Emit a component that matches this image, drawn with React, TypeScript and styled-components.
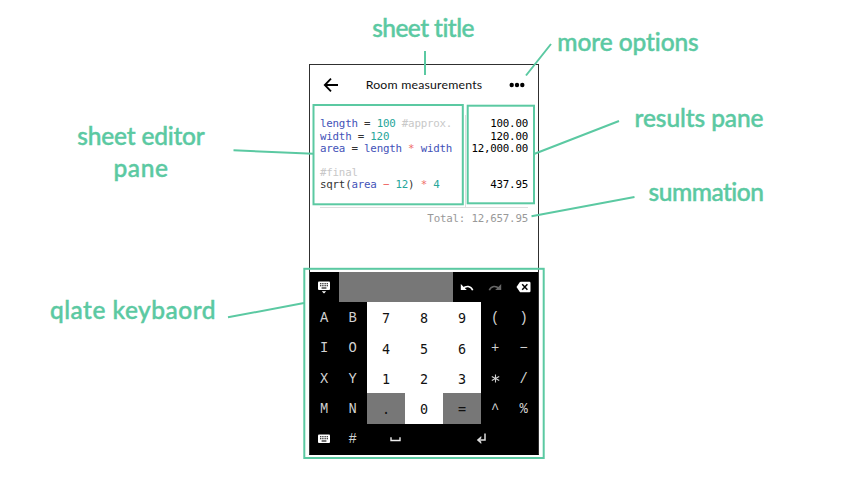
import React from 'react';
import styled, { createGlobalStyle } from 'styled-components';

const GREEN = '#5bc9a2';

const GlobalStyle = createGlobalStyle`
  * { box-sizing: border-box; }
  body { margin: 0; background: #fff; overflow: hidden; }
`;

const Canvas = styled.main`
  position: relative;
  width: 848px;
  height: 480px;
  padding-top: 64px;
  background: #fff;
`;

const Phone = styled.section`
  display: flex;
  flex-direction: column;
  width: 230px;
  height: 391px;
  margin-left: 309px;
  border: 1px solid #303030;
  border-bottom-color: #000;
  background: #fff;
`;

const Header = styled.header`
  display: flex;
  align-items: center;
  justify-content: space-between;
  height: 40px;
  padding: 0 13px;
`;

const Title = styled.h1`
  margin: 0;
  color: #111;
  font: 400 12.3px/16px Lato, sans-serif;
  letter-spacing: 0.2px;
  white-space: nowrap;
`;

const Sheet = styled.div`
  display: flex;
  height: 92px;
  margin: 10px 10px 0;
`;

const codeFont = `
  font-family: 'DejaVu Sans Mono', 'Liberation Mono', monospace;
  font-size: 10.8px;
  letter-spacing: -0.21px;
  line-height: 12.2px;
`;

const Editor = styled.div`
  ${codeFont}
  width: 146px;
  padding-top: 3.4px;
  border-right: 1px solid #dedede;
  color: #333;
  white-space: pre;
`;

const Results = styled.div`
  ${codeFont}
  flex: 1;
  padding-top: 3.4px;
  color: #000;
  text-align: right;
  white-space: pre;
`;

const Line = styled.div`
  height: 12.2px;
`;

const tokenColors = {
  name: '#4353b8',
  number: '#27a69a',
  operator: '#ef6a68',
  comment: '#c8c8c8',
};

const Token = styled.span<{ $kind: keyof typeof tokenColors }>`
  color: ${({ $kind }) => tokenColors[$kind]};
`;

const Total = styled.div`
  ${codeFont}
  margin: 0 10px;
  padding-top: 5px;
  border-top: 1px solid #dedede;
  color: #999;
  text-align: right;
`;

const Keyboard = styled.div`
  display: grid;
  grid-template-columns: repeat(24, 1fr);
  grid-template-rows: repeat(6, 1fr);
  height: 182px;
  margin-top: auto;
  background: #000;
`;

type Tone = 'dark' | 'light' | 'grey';

const Key = styled.div<{ $span: number; $tone: Tone }>`
  grid-column: span ${({ $span }) => $span};
  display: flex;
  align-items: center;
  justify-content: center;
  background: ${({ $tone }) => ({ dark: '#000', light: '#fff', grey: '#777' })[$tone]};
  color: ${({ $tone }) => ($tone === 'dark' ? '#d2d2d2' : '#111')};
  font-family: ${({ $tone }) =>
    $tone === 'dark' ? "'Liberation Mono', monospace" : "'DejaVu Sans Mono', monospace"};
  font-size: ${({ $tone }) => ($tone === 'dark' ? '13.8px' : '13.4px')};
  line-height: 1;
`;

const Glyph = styled.span`
  padding-top: 3px;
`;

const Annotations = styled.svg`
  position: absolute;
  inset: 0;
  fill: none;
  stroke: ${GREEN};
  stroke-width: 2;
`;

const Label = styled.div<{ $x: number; $y: number; $w: number; $spacing: number }>`
  position: absolute;
  left: ${({ $x }) => $x}px;
  top: ${({ $y }) => $y}px;
  width: ${({ $w }) => $w}px;
  color: ${GREEN};
  font: 500 24.5px/32px Lato, sans-serif;
  font-variant-ligatures: none;
  -webkit-text-stroke: 0.45px ${GREEN};
  letter-spacing: ${({ $spacing }) => $spacing}px;
  text-align: center;
  white-space: nowrap;
`;

const LabelLine = styled.span<{ $spacing?: number }>`
  display: block;
  letter-spacing: ${({ $spacing }) => ($spacing === undefined ? 'inherit' : `${$spacing}px`)};
`;

const BackIcon = () => (
  <svg width="16" height="16" viewBox="0 0 16 16" fill="none" stroke="#000" strokeWidth="1.8">
    <path d="M15 8H2M8 1.7 1.8 8 8 14.3" />
  </svg>
);

const MoreIcon = () => (
  <svg width="16" height="6" viewBox="0 0 16 6">
    <circle cx="2.7" cy="3" r="2.2" />
    <circle cx="8" cy="3" r="2.2" />
    <circle cx="13.3" cy="3" r="2.2" />
  </svg>
);

const KeyboardIcon = ({ hide = false }: { hide?: boolean }) => (
  <svg width="12" height="13" viewBox="0 0 12 13">
    <rect y={hide ? 0.5 : 2.5} width="12" height="8.4" rx="1" fill="#fff" />
    <g transform={hide ? 'translate(0 -1.5)' : 'translate(0 .5)'} stroke="#000" strokeWidth="1.1">
      <path d="M2 4.2h8M2 6.2h8" strokeDasharray="1.1 .62" />
      <path d="M3.6 8.5h4.8" />
    </g>
    {hide && <path d="M3.8 10.2h4.4L6 12.5Z" fill="#fff" />}
  </svg>
);

const UndoIcon = ({ redo = false }: { redo?: boolean }) => (
  <svg width="14" height="9" viewBox="0 0 14 9">
    <g transform={redo ? 'matrix(-1 0 0 1 14 0)' : undefined}>
      <path d="M.8 1v6h6L4.5 4.8Z" fill={redo ? '#666' : '#fff'} />
      <path d="M3 5.6C6 2.4 10.7 2.6 12.7 7.3" fill="none" stroke={redo ? '#666' : '#fff'} strokeWidth="1.6" />
    </g>
  </svg>
);

const DeleteIcon = () => (
  <svg width="15" height="12" viewBox="0 0 15 12">
    <path d="M4.8.7h8.5q1.2 0 1.2 1.2v8.2q0 1.2-1.2 1.2H4.8q-.7 0-1.1-.6L.5 6l3.2-4.7q.4-.6 1.1-.6Z" fill="#fff" />
    <path d="m6.2 3.3 5.2 5.4m0-5.4L6.2 8.7" stroke="#000" strokeWidth="1.5" />
  </svg>
);

const SpaceIcon = () => (
  <svg width="11" height="6" viewBox="0 0 11 6" fill="none" stroke="#eee" strokeWidth="1.4">
    <path d="M1 1.3v3.2h9V1.3" />
  </svg>
);

const EnterIcon = () => (
  <svg width="11" height="12" viewBox="0 0 11 12">
    <path d="M9 .6v6.4H3" fill="none" stroke="#ddd" strokeWidth="1.5" />
    <path d="M5.3 2.9v2.3L3.4 7l1.9 1.8v2.3L.8 7Z" fill="#ddd" />
  </svg>
);

const rows = ['AB789()', 'IO456+−', 'XY123*/', 'MN.0=^%'];

const symbolKey = (char: string, index: number) => {
  const middle = index > 1 && index < 5;
  const tone: Tone = !middle ? 'dark' : char === '.' || char === '=' ? 'grey' : 'light';
  return (
    <Key key={char} $span={middle ? 4 : 3} $tone={tone}>
      {char === '*' ? (
        <svg width="9" height="9" viewBox="0 0 9 9" stroke="#d2d2d2" strokeWidth="1.1">
          <path d="M4.5.5v8M.8 2.4l7.4 4.2M.8 6.6l7.4-4.2" />
        </svg>
      ) : (
        <Glyph>{char}</Glyph>
      )}
    </Key>
  );
};

export default function App() {
  return (
    <>
      <GlobalStyle />
      <Canvas>
        <Phone>
          <Header>
            <BackIcon />
            <Title>Room measurements</Title>
            <MoreIcon />
          </Header>
          <Sheet>
            <Editor>
              <Line><Token $kind="name">length</Token> = <Token $kind="number">100</Token> <Token $kind="comment">#approx.</Token></Line>
              <Line><Token $kind="name">width</Token> = <Token $kind="number">120</Token></Line>
              <Line><Token $kind="name">area</Token> = <Token $kind="name">length</Token> <Token $kind="operator">*</Token> <Token $kind="name">width</Token></Line>
              <Line />
              <Line><Token $kind="comment">#final</Token></Line>
              <Line>sqrt(<Token $kind="name">area</Token> <Token $kind="operator">−</Token> <Token $kind="number">12</Token>) <Token $kind="operator">*</Token> <Token $kind="number">4</Token></Line>
            </Editor>
            <Results>
              {['100.00', '120.00', '12,000.00', '', '', '437.95'].map((value, i) => (
                <Line key={i}>{value}</Line>
              ))}
            </Results>
          </Sheet>
          <Total>Total: 12,657.95</Total>
          <Keyboard>
            <Key $span={3} $tone="dark"><KeyboardIcon hide /></Key>
            <Key $span={12} $tone="grey" />
            <Key $span={3} $tone="dark"><UndoIcon /></Key>
            <Key $span={3} $tone="dark"><UndoIcon redo /></Key>
            <Key $span={3} $tone="dark"><DeleteIcon /></Key>
            {rows.flatMap((row) => [...row].map(symbolKey))}
            <Key $span={3} $tone="dark"><KeyboardIcon /></Key>
            <Key $span={3} $tone="dark"><Glyph>#</Glyph></Key>
            <Key $span={6} $tone="dark"><SpaceIcon /></Key>
            <Key $span={12} $tone="dark"><EnterIcon /></Key>
          </Keyboard>
        </Phone>
        <Annotations width="848" height="480" viewBox="0 0 848 480">
          <rect x="313.5" y="105" width="149.3" height="99.3" />
          <rect x="467.7" y="105.7" width="66.3" height="97.6" />
          <rect x="304.3" y="268.8" width="239.4" height="189.2" />
          <path d="M425 51v24M551 44l-25 31.5M233.5 150.3l80 3.5M534 154l85-33M531.5 216.3l103-19.3M228 317.3l76-14.3" />
        </Annotations>
        <Label $x={353} $y={12} $w={140} $spacing={-0.55}>sheet title</Label>
        <Label $x={538} $y={26} $w={180} $spacing={-0.1}>more options</Label>
        <Label $x={60} $y={120} $w={162} $spacing={-0.2}>
          <LabelLine>sheet editor</LabelLine>
          <LabelLine $spacing={0.6}>pane</LabelLine>
        </Label>
        <Label $x={618} $y={102} $w={162} $spacing={-0.1}>results pane</Label>
        <Label $x={625} $y={176} $w={162} $spacing={-0.5}>summation</Label>
        <Label $x={42} $y={294} $w={182} $spacing={0.5}>qlate keybaord</Label>
      </Canvas>
    </>
  );
}
